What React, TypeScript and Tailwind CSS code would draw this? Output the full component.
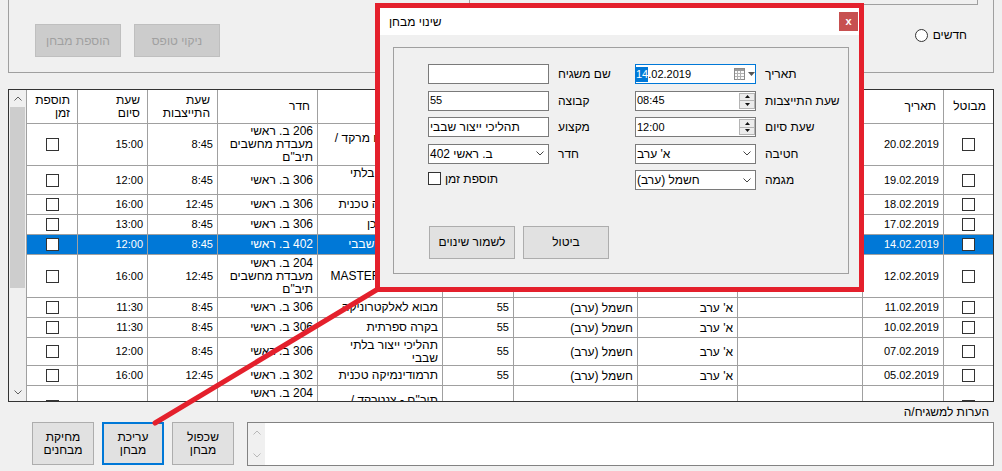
import React from "react";

type Row = {
  h: number;
  date: string;
  div: string;
  major: string;
  grp: string;
  subj: string[];
  room: string[];
  start: string;
  end: string;
  sel?: boolean;
};

const lab3 = (n: string) => [`${n} ב. ראשי`, "מעבדת מחשבים", 'תיב"ם'];

const rows: Row[] = [
  { h: 42, date: "20.02.2019", div: "א' ערב", major: "מכונות (ערב)", grp: "55", subj: ['תכנות תיב"ם מרקד /', "סדנה"], room: lab3("206"), start: "8:45", end: "15:00" },
  { h: 29, date: "19.02.2019", div: "א' ערב", major: "מכונות (ערב)", grp: "55", subj: ["תהליכי ייצור בלתי", "שבבי"], room: ["306 ב. ראשי"], start: "8:45", end: "12:00" },
  { h: 20, date: "18.02.2019", div: "א' ערב", major: "מכונות (ערב)", grp: "55", subj: ["תרמודינמיקה טכנית"], room: ["306 ב. ראשי"], start: "12:45", end: "16:00" },
  { h: 20, date: "17.02.2019", div: "א' ערב", major: "מכונות (ערב)", grp: "55", subj: ["אוטומציה ותכן"], room: ["306 ב. ראשי"], start: "8:45", end: "13:00" },
  { h: 20, date: "14.02.2019", div: "א' ערב", major: "חשמל (ערב)", grp: "55", subj: ["תהליכי ייצור שבבי"], room: ["402 ב. ראשי"], start: "8:45", end: "12:00", sel: true },
  { h: 43, date: "12.02.2019", div: "א' ערב", major: "מכונות (ערב)", grp: "55", subj: ["סדנת MASTERCAM"], room: lab3("204"), start: "12:45", end: "16:00" },
  { h: 20, date: "11.02.2019", div: "א' ערב", major: "חשמל (ערב)", grp: "55", subj: ["מבוא לאלקטרוניקה"], room: ["306 ב. ראשי"], start: "8:45", end: "11:30" },
  { h: 20, date: "10.02.2019", div: "א' ערב", major: "חשמל (ערב)", grp: "55", subj: ["בקרה ספרתית"], room: ["306 ב. ראשי"], start: "8:45", end: "11:30" },
  { h: 28, date: "07.02.2019", div: "א' ערב", major: "חשמל (ערב)", grp: "55", subj: ["תהליכי ייצור בלתי", "שבבי"], room: ["306 ב. ראשי"], start: "8:45", end: "12:00" },
  { h: 20, date: "05.02.2019", div: "א' ערב", major: "חשמל (ערב)", grp: "55", subj: ["תרמודינמיקה טכנית"], room: ["302 ב. ראשי"], start: "12:45", end: "16:00" },
  { h: 42, date: "04.02.2019", div: "א' ערב", major: "מכונות (ערב)", grp: "55", subj: ['תיב"ם - צנטרקד /', "סדנה"], room: lab3("204"), start: "8:45", end: "15:00" },
];

const headers = ["מבוטל", "תאריך", "שם משגיח", "חטיבה", "מגמה", "קבוצה", "מקצוע", "חדר", "שעת\nהתייצבות", "שעת\nסיום", "תוספת\nזמן"];

function Box() {
  return <span className="block w-[13px] h-[13px] border border-[#333] bg-white" />;
}

function Chevron({ up, color = "#606060" }: { up?: boolean; color?: string }) {
  return (
    <svg width="8" height="5" viewBox="0 0 8 5">
      <path d={up ? "M0.5 4.5 L4 1 L7.5 4.5" : "M0.5 0.5 L4 4 L7.5 0.5"} fill="none" stroke={color} strokeWidth="1" />
    </svg>
  );
}

function Cell({ children, sel, center, num }: { children?: React.ReactNode; sel?: boolean; center?: boolean; num?: boolean }) {
  return (
    <div
      className={`flex items-center overflow-hidden border-l border-b border-[#a0a0a0] ${num ? "text-[11px]" : ""} ${center ? "justify-center" : "pr-[4px]"} ${sel ? "bg-[#0078d7] text-white" : "bg-white"}`}
    >
      {children}
    </div>
  );
}

function Lines({ lines }: { lines: string[] }) {
  return (
    <div className="text-right leading-[13px] whitespace-nowrap">
      {lines.map((l, i) => (
        <div key={i}>{l}</div>
      ))}
    </div>
  );
}

function ExamGrid() {
  return (
    <div className="ml-[8px] mt-[16px] w-[986px] h-[313px] border border-[#333] bg-white flex overflow-hidden">
      {/* scrollbar (left, RTL grid) */}
      <div className="w-[17px] shrink-0 bg-[#f0f0f0] flex flex-col">
        <div className="h-[17px] flex items-center justify-center">
          <Chevron up />
        </div>
        <div className="mx-[1px] h-[181px] bg-[#cdcdcd]" />
        <div className="flex-1" />
        <div className="h-[17px] flex items-center justify-center">
          <Chevron />
        </div>
      </div>

      <div className="w-[967px] flex flex-col">
        <div dir="rtl" className="grid grid-cols-[50px_81px_125px_100px_124px_71px_125px_100px_70px_70px_51px] h-[34px] shrink-0">
          {headers.map((h, i) => (
            <div key={i} className="flex items-center pr-[7px] border-l border-b border-[#a0a0a0] bg-white whitespace-pre leading-[13px] text-right">
              {h}
            </div>
          ))}
        </div>
        {rows.map((r, i) => (
          <div
            key={i}
            dir="rtl"
            className="grid grid-cols-[50px_81px_125px_100px_124px_71px_125px_100px_70px_70px_51px] shrink-0"
            style={{ height: r.h }}
          >
            <Cell sel={r.sel} center>
              <Box />
            </Cell>
            <Cell sel={r.sel} num>{r.date}</Cell>
            <Cell sel={r.sel} />
            <Cell sel={r.sel}>{r.div}</Cell>
            <Cell sel={r.sel}>{r.major}</Cell>
            <Cell sel={r.sel} num>{r.grp}</Cell>
            <Cell sel={r.sel}>
              <Lines lines={r.subj} />
            </Cell>
            <Cell sel={r.sel}>
              <Lines lines={r.room} />
            </Cell>
            <Cell sel={r.sel} num>{r.start}</Cell>
            <Cell sel={r.sel} num>{r.end}</Cell>
            <Cell sel={r.sel} center>
              <Box />
            </Cell>
          </div>
        ))}
      </div>
    </div>
  );
}

function Field({ children, focus }: { children?: React.ReactNode; focus?: boolean }) {
  return (
    <div dir="rtl" className={`h-[20px] flex items-center bg-white border ${focus ? "border-[#0078d7]" : "border-[#7a7a7a]"}`}>
      {children}
    </div>
  );
}

function TextValue({ v, num }: { v: string; num?: boolean }) {
  return <div className={`flex-1 text-left pl-[1px] whitespace-nowrap ${num ? "text-[11px]" : ""}`}>{v}</div>;
}

function SelectField({ v }: { v: string }) {
  return (
    <Field>
      <div className="mr-[4px] flex items-center">
        <Chevron color="#444" />
      </div>
      <TextValue v={v} />
    </Field>
  );
}

function Spinner({ v }: { v: string }) {
  return (
    <Field>
      <div className="ml-[2px] w-[16px] h-[16px] flex flex-col border border-[#b4b4b4] bg-[#ececec]">
        <div className="flex-1 flex items-center justify-center border-b border-[#b4b4b4]">
          <svg width="5" height="3" viewBox="0 0 5 3"><path d="M0 3 L2.5 0 L5 3Z" fill="#111" /></svg>
        </div>
        <div className="flex-1 flex items-center justify-center">
          <svg width="5" height="3" viewBox="0 0 5 3"><path d="M0 0 L2.5 3 L5 0Z" fill="#111" /></svg>
        </div>
      </div>
      <TextValue v={v} num />
    </Field>
  );
}

function DatePicker() {
  return (
    <Field focus>
      <div className="ml-[3px] flex items-center gap-[3px]">
        <svg width="7" height="4" viewBox="0 0 7 4"><path d="M0 0 L3.5 4 L7 0Z" fill="#555" /></svg>
        <svg width="11" height="12" viewBox="0 0 11 12">
          <rect x="0.5" y="0.5" width="10" height="11" fill="#fafafa" stroke="#8a8a8a" />
          <rect x="1" y="1" width="9" height="2" fill="#9a9a9a" />
          <path d="M3.5 3 V11.5 M6.5 3 V11.5 M1 5.5 H10 M1 8.5 H10" stroke="#b0b0b0" strokeWidth="1" />
        </svg>
      </div>
      <div dir="ltr" className="flex-1 flex items-center text-[11px]">
        <span className="bg-[#0078d7] text-white leading-[15px]">14</span>
        <span>.02.2019</span>
      </div>
    </Field>
  );
}

function Label({ t }: { t: string }) {
  return (
    <div className="pl-[9px] flex items-center whitespace-nowrap">
      <span dir="rtl">{t}</span>
    </div>
  );
}

function WinButton({ children, className = "", focused }: { children: React.ReactNode; className?: string; focused?: boolean }) {
  return (
    <button
      className={`flex items-center justify-center bg-[#e1e1e1] text-black leading-[13px] ${focused ? "border-2 border-[#0078d7]" : "border border-[#adadad]"} ${className}`}
    >
      {children}
    </button>
  );
}

function EditDialog() {
  return (
    <div className="absolute left-[375px] top-[3px] w-[489px] h-[289px] border-[5px] border-[#e4202c] flex flex-col bg-[#f0f0f0]">
      <div className="h-[27px] shrink-0 bg-white flex items-center justify-between pl-[9px] pr-[1px]">
        <span dir="rtl">שינוי מבחן</span>
        <span className="w-[19px] h-[19px] bg-[#c75050] text-white text-[11px] font-bold flex items-center justify-center leading-none">x</span>
      </div>
      <div className="pt-[12px] pl-[13px]">
        <div className="w-[456px] h-[227px] border border-[#a0a0a0] pl-[34px] pt-[16px]">
          <div className="grid grid-cols-[121px_86px_121px_auto] auto-rows-[20px] gap-y-[6.5px]">
            <Field />
            <Label t="שם משגיח" />
            <DatePicker />
            <Label t="תאריך" />

            <Field>
              <TextValue v="55" num />
            </Field>
            <Label t="קבוצה" />
            <Spinner v="08:45" />
            <Label t="שעת התייצבות" />

            <Field>
              <TextValue v="תהליכי ייצור שבבי" />
            </Field>
            <Label t="מקצוע" />
            <Spinner v="12:00" />
            <Label t="שעת סיום" />

            <SelectField v="ב. ראשי 402" />
            <Label t="חדר" />
            <SelectField v="א' ערב" />
            <Label t="חטיבה" />

            <div className="col-span-2 flex items-center gap-[4px] pb-[3px]">
              <span className="block w-[13px] h-[13px] border border-[#333] bg-white" />
              <span dir="rtl">תוספת זמן</span>
            </div>
            <SelectField v="חשמל (ערב)" />
            <Label t="מגמה" />
          </div>
          <div className="mt-[36px] ml-[1px] flex gap-[8px]">
            <WinButton className="w-[86px] h-[33px]">
              <span dir="rtl">לשמור שינוים</span>
            </WinButton>
            <WinButton className="w-[86px] h-[33px]">
              <span dir="rtl">ביטול</span>
            </WinButton>
          </div>
        </div>
      </div>
    </div>
  );
}

export default function App() {
  return (
    <div className="relative w-[1002px] h-[471px] overflow-hidden bg-[#f0f0f0] text-[12px] text-black font-['Liberation_Sans','DejaVu_Sans',sans-serif]">
      {/* FILTER GROUP */}
      <div className="ml-[8px] w-[986px] h-[73px] border-l border-r border-b border-[#a0a0a0]">
        <div className="h-[5px] flex justify-end">
          <div className="mr-[15px] w-[509px] h-[5px] border-l border-r border-b border-[#a0a0a0]" />
        </div>
        <div className="mt-[19px] pl-[26px] pr-[26px] flex items-start justify-between">
          <div className="flex gap-[13px]">
            <div className="w-[86px] h-[33px] bg-[#cccccc] border border-[#bfbfbf] text-[#a0a0a0] flex items-center justify-center" dir="rtl">
              הוספת מבחן
            </div>
            <div className="w-[86px] h-[33px] bg-[#cccccc] border border-[#bfbfbf] text-[#a0a0a0] flex items-center justify-center" dir="rtl">
              ניקוי טופס
            </div>
          </div>
          <div className="mt-[2px] flex items-center gap-[5px]">
            <span className="block w-[13px] h-[13px] rounded-full border border-[#333] bg-white" />
            <span dir="rtl">חדשים</span>
          </div>
        </div>
      </div>

      {/* EXAMS GRID */}
      <ExamGrid />

      {/* BOTTOM */}
      <div className="mt-[4px] flex items-start">
        <div className="ml-[32px] mt-[16px] flex gap-[8px]">
          <WinButton className="w-[62px] h-[43px]">
            <span dir="rtl" className="text-center">מחיקת<br />מבחנים</span>
          </WinButton>
          <WinButton className="w-[62px] h-[43px]" focused>
            <span dir="rtl" className="text-center">עריכת<br />מבחן</span>
          </WinButton>
          <WinButton className="w-[62px] h-[43px]">
            <span dir="rtl" className="text-center">שכפול<br />מבחן</span>
          </WinButton>
        </div>
        <div className="ml-auto mr-[8px] w-[747px]">
          <div dir="rtl" className="h-[13px] leading-[13px] pr-[5px] text-right">הערות למשגיח/ה</div>
          <div className="mt-[3px] h-[44px] border border-[#828282] bg-white flex">
            <div className="w-[17px] bg-[#f0f0f0] flex flex-col items-center justify-between py-[7px]">
              <Chevron up color="#b8b8b8" />
              <Chevron color="#b8b8b8" />
            </div>
          </div>
        </div>
      </div>

      {/* DIALOG + POINTER */}
      <EditDialog />
      <svg className="absolute inset-0 pointer-events-none" width="1002" height="471">
        <line x1="155" y1="423" x2="378" y2="289" stroke="#e4202c" strokeWidth="5" strokeLinecap="round" />
      </svg>
    </div>
  );
}
